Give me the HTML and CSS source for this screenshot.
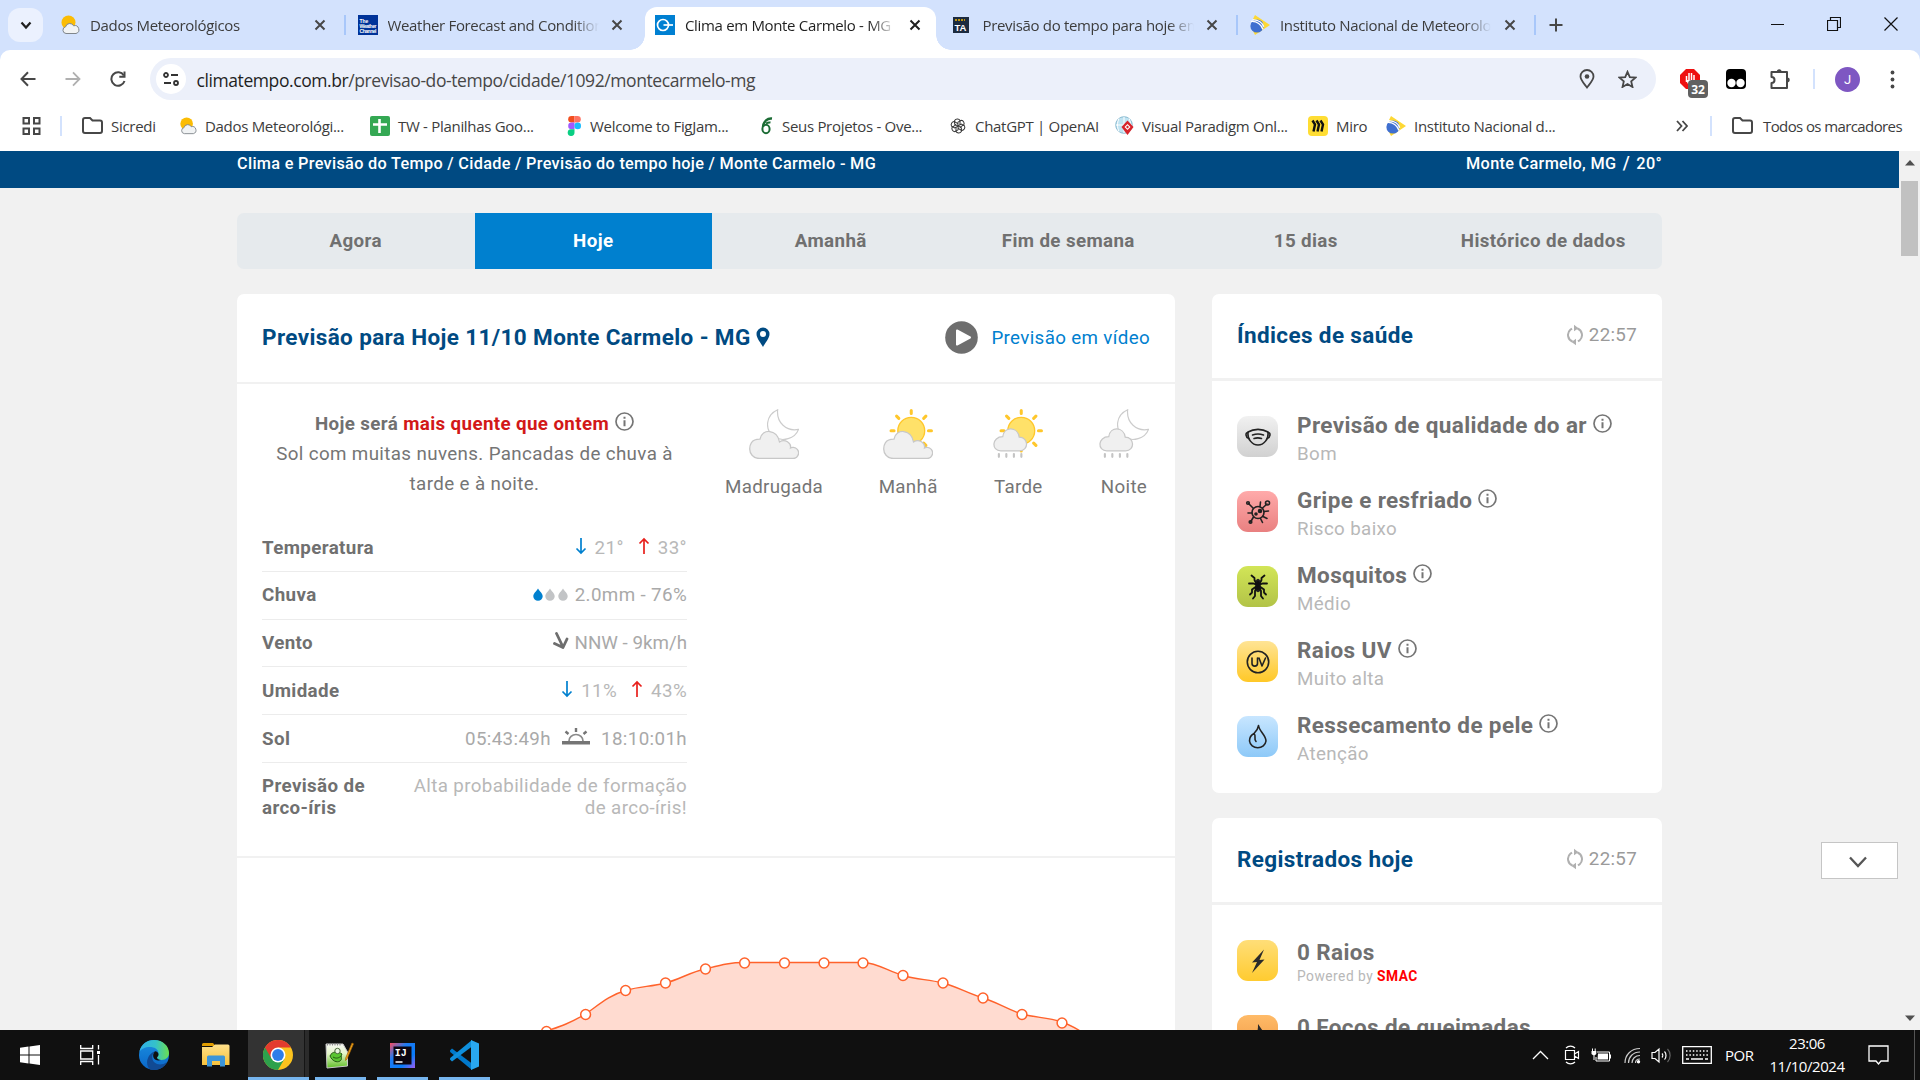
FILE: index.html
```html
<!DOCTYPE html>
<html lang="pt-BR">
<head>
<meta charset="utf-8">
<title>Clima em Monte Carmelo - MG</title>
<link rel="stylesheet" href="styles.css">
</head>
<body>
<svg class="defs" width="0" height="0">
  <defs>
    <linearGradient id="g-edge" x1="0" y1="0" x2="1" y2="0"><stop offset="0" stop-color="#2fb0ec"/><stop offset=".55" stop-color="#35c1c9"/><stop offset="1" stop-color="#6be04f"/></linearGradient>
    <linearGradient id="g-edge2" x1="0" y1="0" x2="0" y2="1"><stop offset="0" stop-color="#1b8fe0"/><stop offset="1" stop-color="#0a66c8"/></linearGradient>
    <linearGradient id="g-folder" x1="0" y1="0" x2="0" y2="1"><stop offset="0" stop-color="#ffe08a"/><stop offset="1" stop-color="#f7c23c"/></linearGradient>
    <linearGradient id="g-npp" x1="0" y1="0" x2="0" y2="1"><stop offset="0" stop-color="#f7f7f4"/><stop offset=".4" stop-color="#e4f5c9"/><stop offset="1" stop-color="#5fbf25"/></linearGradient>
    <linearGradient id="g-ij" x1="0" y1="0" x2="1" y2="1"><stop offset="0" stop-color="#fc4c61"/><stop offset=".35" stop-color="#1d7bf2"/><stop offset=".7" stop-color="#087cfa"/><stop offset="1" stop-color="#a05cf0"/></linearGradient>
    <symbol id="x" viewBox="0 0 12 12"><path d="M1.500 1.500l9 9M10.500 1.500l-9 9" stroke="currentColor" stroke-width="2" fill="none"/></symbol>
    <symbol id="sun-cloud" viewBox="0 0 20 20"><circle cx="8.500" cy="7.500" r="7" fill="#fbbc04"/><path d="M6 18.500a3.400 3.400 0 0 1-.4-6.700 4.300 4.300 0 0 1 8-1 3.800 3.800 0 0 1 2.400 7.700z" fill="#f1f3f4" stroke="#80868b" stroke-width="1"/></symbol>
    <symbol id="inmet" viewBox="0 0 20 20"><path d="M5 0L20 10 5 20 3 16 12 10 3 4z" fill="#fdd835"/><circle cx="7" cy="11" r="6.600" fill="#3f6fd0"/><path d="M1 6.500c6-.5 10.500 3 12 8M2.500 4.800c6-.3 10 3 11.200 7" stroke="#fff" stroke-width="1.300" fill="none"/></symbol>
    <symbol id="folder" viewBox="0 0 21 17"><path d="M1 3.200V14a2 2 0 0 0 2 2h15a2 2 0 0 0 2-2V5.500a2 2 0 0 0-2-2h-7.500L8 1H3a2 2 0 0 0-2 2z" fill="none" stroke="#474747" stroke-width="2"/></symbol>
    <symbol id="info" viewBox="0 0 19 19"><circle cx="9.500" cy="9.500" r="8.500" fill="none" stroke="#757575" stroke-width="1.700"/><path d="M9.500 8.300v6M9.500 4.800v2" stroke="#757575" stroke-width="2" fill="none"/></symbol>
    <symbol id="sync" viewBox="0 0 16 22"><path d="M5.500 17.500A7 7 0 0 1 3.300 5.800L5 4.600M10.500 4.500a7 7 0 0 1 2.200 11.700L11 17.400" fill="none" stroke="#b0b0b0" stroke-width="2"/><path d="M7 .8l4.500 3.500L7 7.200zM9 14.800v6.400L4.500 18z" fill="#b0b0b0"/></symbol>
    <symbol id="down" viewBox="0 0 12 18"><path d="M6 1v15M1.500 11.500L6 16l4.500-4.500" fill="none" stroke="#0080cf" stroke-width="1.700"/></symbol>
    <symbol id="up" viewBox="0 0 12 18"><path d="M6 17V2M1.500 6.500L6 2l4.500 4.500" fill="none" stroke="#e8201c" stroke-width="1.700"/></symbol>
    <symbol id="drop" viewBox="0 0 10 13"><path d="M5 .5C6.500 3.200 9.700 5.500 9.700 8.300a4.700 4.400 0 0 1-9.400 0C.3 5.500 3.500 3.200 5 .5z" fill="currentColor"/></symbol>
    <symbol id="moon" viewBox="0 0 34 34"><path d="M11 .7C-1 6-3 21 7 28.500c9 6 22 2 25.500-7.500C20 23.500 9.500 14 11 .7z" fill="#fff" stroke="#ccc" stroke-width="1.200"/></symbol>
    <symbol id="sun" viewBox="0 0 44 44"><circle cx="22" cy="22" r="13.300" fill="#ffe169" stroke="#ffc72b" stroke-width="1.300"/><path d="M22 2v3M22 39v3M2 22h3M39 22h3M7.500 7.500l2.200 2.200M34.300 34.300l2.200 2.200M36.500 7.500l-2.200 2.200M7.500 36.500l2.200-2.200" stroke="#ffc72b" stroke-width="3" stroke-linecap="round"/></symbol>
    <symbol id="cloud" viewBox="0 0 50 29"><path d="M10.500 28h33a5.500 5.500 0 0 0 1-11.200c-1.200.2-2 .2-3 .7 1-5-5.500-9.500-11-6C28.500-1.500 13-2.500 11 8.700 2 8.500.7 14.500.7 18.500c0 4 3 9.500 9.800 9.500z" fill="#f0f0f0" stroke="#c8c8c8" stroke-width="1.300"/></symbol>
    <symbol id="rain" viewBox="0 0 36 32"><path d="M8 23.500h19.500c9.500 0 9.500-14 -.5-14C25.500-1.500 11.500-2 10 9-1.500 9-2 23.500 8 23.500z" fill="#f0f0f0" stroke="#c8c8c8" stroke-width="1.300"/><path d="M6 26.800v3M13.700 26.800v3M21.500 26.800v3M29.200 26.800v3" stroke="#c4c4c4" stroke-width="2.200" stroke-linecap="round"/></symbol>
  </defs>
</svg>

<header class="browser">
  <div class="tabstrip">
    <div class="tab-search"><svg width="12" height="9" viewBox="0 0 12 9"><path d="M1.500 1.500L6 6.500l4.500-5" fill="none" stroke="#1f1f1f" stroke-width="2.200"/></svg></div>
    <div class="tab"><svg class="fav"><use href="#sun-cloud"/></svg><span class="tab-title">Dados Meteorológicos</span><svg class="close"><use href="#x"/></svg></div>
    <div class="tab divided"><svg class="fav" viewBox="0 0 20 20"><rect width="20" height="20" fill="#003399"/><g fill="#fff" font-family="Liberation Sans, sans-serif" font-size="5" font-weight="700"><text x="1.500" y="8">The</text><text x="1.500" y="13" textLength="17">Weather</text><text x="1.500" y="18" textLength="17">Channel</text></g></svg><span class="tab-title">Weather Forecast and Conditions</span><svg class="close"><use href="#x"/></svg></div>
    <div class="tab active"><svg class="fav" viewBox="0 0 20 20"><rect width="20" height="20" fill="#0080d2"/><circle cx="8" cy="10" r="5.500" fill="none" stroke="#fff" stroke-width="1.700"/><path d="M8.500 10H18" stroke="#fff" stroke-width="1.700"/></svg><span class="tab-title">Clima em Monte Carmelo - MG |</span><svg class="close"><use href="#x"/></svg></div>
    <div class="tab"><svg class="fav" viewBox="0 0 20 20"><rect x="0" y="2" width="16" height="16" fill="#1c2b3f"/><path d="M2 5h10" stroke="#f5b800" stroke-width="1.600" stroke-dasharray="2 1"/><text x="1.500" y="16" font-family="Liberation Sans, sans-serif" font-size="9.500" font-weight="700" fill="#fff">TA</text></svg><span class="tab-title">Previsão do tempo para hoje em M</span><svg class="close"><use href="#x"/></svg></div>
    <div class="tab divided"><svg class="fav"><use href="#inmet"/></svg><span class="tab-title">Instituto Nacional de Meteorologia</span><svg class="close"><use href="#x"/></svg></div>
    <div class="new-tab"><svg width="14" height="14" viewBox="0 0 14 14"><path d="M7 .5v13M.5 7h13" stroke="#474747" stroke-width="2"/></svg></div>
    <div class="win-controls">
      <svg width="13" height="13" viewBox="0 0 13 13"><path d="M0 6.500h13" stroke="#111"/></svg>
      <svg width="14" height="14" viewBox="0 0 14 14"><path d="M.5 3.500h10v10H.5zM3.500 3V.5h10v10H11" fill="none" stroke="#111" stroke-width="1.200"/></svg>
      <svg width="14" height="14" viewBox="0 0 14 14"><path d="M.5.5l13 13M13.500.5l-13 13" stroke="#111" stroke-width="1.200"/></svg>
    </div>
  </div>

  <div class="toolbar">
    <div class="nav-buttons">
      <svg width="16" height="16" viewBox="0 0 16 16"><path d="M15.500 8H2M8 1.300L1.500 8 8 14.700" fill="none" stroke="#474747" stroke-width="2"/></svg>
      <svg width="16" height="16" viewBox="0 0 16 16"><path d="M.5 8H14M8 1.300L14.500 8 8 14.700" fill="none" stroke="#b0b0b0" stroke-width="1.800"/></svg>
      <svg width="16" height="16" viewBox="0 0 16 16"><path d="M13.800 4.500A6.700 6.700 0 1 0 14.500 10" fill="none" stroke="#474747" stroke-width="2"/><path d="M15.500.5v6.200H9.300V4.800h4.200V.5z" fill="#474747"/></svg>
    </div>
    <div class="omnibox">
      <span class="site-info"><svg width="16" height="14" viewBox="0 0 16 14"><g fill="none" stroke="#333" stroke-width="1.800"><circle cx="3" cy="3" r="2"/><path d="M8 3h7M1 11h7"/><circle cx="13" cy="11" r="2"/></g></svg></span>
      <span class="url"><b>climatempo.com.br</b>/previsao-do-tempo/cidade/1092/montecarmelo-mg</span>
      <svg class="pin" width="16" height="20" viewBox="0 0 16 20"><path d="M8 18.500C5 14.500 1.500 11 1.500 7.500a6.500 6.500 0 0 1 13 0c0 3.500-3.500 7-6.500 11z" fill="none" stroke="#474747" stroke-width="1.800"/><circle cx="8" cy="7.500" r="2.300" fill="#474747"/></svg>
      <svg width="19" height="18" viewBox="0 0 19 18"><path d="M9.500 1.800l2.300 5.300 5.700.5-4.300 3.800 1.300 5.600-5-3-5 3 1.300-5.600L1.500 7.600l5.700-.5z" fill="none" stroke="#474747" stroke-width="1.800"/></svg>
    </div>
    <div class="extensions">
      <svg class="e-block" width="30" height="30" viewBox="0 0 30 30"><path d="M7 1h8l6 6v8l-6 6H7l-6-6V7z" fill="#ee1111"/><path d="M7.500 14V8M10 12V5M12.500 12V5M15 12V7" stroke="#fff" stroke-width="1.500" fill="none"/><path d="M6.700 12h9v5l-2 2h-3z" fill="#fff"/><rect x="9" y="12" width="20" height="18" rx="4" fill="#616161"/><text x="19" y="26" text-anchor="middle" font-family="Open Sans, sans-serif" font-size="12" font-weight="700" fill="#fff">32</text></svg>
      <svg class="e-dark" width="20" height="20" viewBox="0 0 20 20"><rect width="20" height="20" rx="4" fill="#000"/><circle cx="5.500" cy="14" r="4.200" fill="#fff"/><circle cx="14.500" cy="14" r="4.200" fill="#fff"/></svg>
      <svg class="e-puzzle" width="22" height="22" viewBox="0 0 22 22"><path d="M2.500 4h15.500v16h-15.500v-5a3 3 0 0 0 0-6z" fill="none" stroke="#474747" stroke-width="2" stroke-linejoin="round"/><path d="M7.800 4a2.400 2.700 0 0 1 4.800 0zM18 9.500a2.700 2.400 0 0 1 0 4.800z" fill="#474747"/></svg>
      <i class="rule"></i>
      <span class="avatar">J</span>
      <svg class="e-menu" width="5" height="19" viewBox="0 0 5 19"><g fill="#474747"><circle cx="2.500" cy="2.500" r="1.900"/><circle cx="2.500" cy="9.500" r="1.900"/><circle cx="2.500" cy="16.500" r="1.900"/></g></svg>
    </div>
  </div>

  <div class="bookmarks">
    <svg class="apps" width="19" height="18" viewBox="0 0 19 18"><path d="M1.500 1h5.500v5.500H1.500zM12 1h5.500v5.500H12zM1.500 11.500h5.500V17H1.500zM12 11.500h5.500V17H12z" fill="none" stroke="#474747" stroke-width="2"/></svg>
    <i class="rule"></i>
    <div class="bm" style="width:97px"><svg width="21" height="17"><use href="#folder"/></svg>Sicredi</div>
    <div class="bm" style="width:191px"><svg width="18" height="20"><use href="#sun-cloud"/></svg>Dados Meteorológi...</div>
    <div class="bm" style="width:197px"><svg width="20" height="20" viewBox="0 0 20 20"><rect width="20" height="20" rx="2" fill="#34a853"/><path d="M9.500 3v14M3 8.500h14" stroke="#fff" stroke-width="2.600"/></svg>TW - Planilhas Goo...</div>
    <div class="bm" style="width:192px"><svg width="15" height="20" viewBox="1 0 15 20"><path d="M8.500 0h-3a3.300 3.300 0 0 0 0 6.600h3z" fill="#f24e1e"/><path d="M8.500 0h3a3.300 3.300 0 0 1 0 6.600h-3z" fill="#ff7262"/><path d="M8.500 6.600h-3a3.300 3.300 0 0 0 0 6.600h3z" fill="#a259ff"/><circle cx="11.700" cy="9.900" r="3.300" fill="#1abcfe"/><path d="M8.500 13.200h-3a3.400 3.400 0 1 0 3 3.400z" fill="#0acf83"/></svg>Welcome to FigJam...</div>
    <div class="bm" style="width:190px"><svg width="15" height="18" viewBox="1 0 15 18"><path d="M14 1.500C9.500 1 5.500 4 5 10" fill="none" stroke="#1b6b34" stroke-width="2.400"/><ellipse cx="8" cy="12" rx="3.600" ry="4.200" fill="none" stroke="#1b6b34" stroke-width="2"/><path d="M8 6.500c1.500-1 3-1.300 4.500-1" stroke="#1b6b34" stroke-width="2" fill="none"/></svg>Seus Projetos - Ove...</div>
    <div class="bm" style="width:166px"><svg width="18" height="18" viewBox="0 0 18 18"><g fill="none" stroke="#333" stroke-width="1.200" transform="translate(1.350 1.350) scale(.85)"><path id="petal" d="M8.900 9V4.500l3.800-2.200c3 .2 4.300 3.600 3 5.500L11.500 10.300"/><use href="#petal" transform="rotate(60 9 9)"/><use href="#petal" transform="rotate(120 9 9)"/><use href="#petal" transform="rotate(180 9 9)"/><use href="#petal" transform="rotate(240 9 9)"/><use href="#petal" transform="rotate(300 9 9)"/></g></svg>ChatGPT | OpenAI</div>
    <div class="bm" style="width:193px"><svg width="19" height="19" viewBox="0 0 19 19"><circle cx="9" cy="9" r="8.300" fill="#bfe3f2" stroke="#86b8cf"/><path d="M9 .7v16.600M.7 9h16.600M4 2.500c-2 4-2 9 0 13M14 2.500c2 4 2 9 0 13" stroke="#fff" fill="none"/><path d="M12.500 4.500l6 6.500-6 8-6-8z" fill="#d8232a"/><path d="M12.500 8l3 3-3 3-3-3z" fill="#fff"/><path d="M12.500 9.500l1.500 1.500-1.500 1.500L11 11z" fill="#d8232a"/></svg>Visual Paradigm Onl...</div>
    <div class="bm" style="width:78px"><svg width="20" height="20" viewBox="0 0 20 20"><rect width="20" height="20" rx="4" fill="#ffdd33"/><path d="M4.500 4.500l2.500 4-1.500 7M8.500 4.500l2.500 4-1.500 7M12.500 4.500l2.500 4-1.500 7" fill="none" stroke="#111" stroke-width="2.400"/></svg>Miro</div>
    <div class="bm" style="width:290px"><svg width="20" height="20"><use href="#inmet"/></svg>Instituto Nacional d...</div>
    <svg class="more" width="12" height="12" viewBox="0 0 12 12"><path d="M1 1l4.500 5L1 11M6.500 1L11 6l-4.500 5" fill="none" stroke="#474747" stroke-width="1.800"/></svg>
    <i class="rule"></i>
    <div class="bm all"><svg width="21" height="17"><use href="#folder"/></svg>Todos os marcadores</div>
  </div>
</header>

<div class="viewport">
  <main class="page">
    <div class="topbar"><div class="wrap"><span>Clima e Previsão do Tempo / Cidade / Previsão do tempo hoje / Monte Carmelo - MG</span><span class="place">Monte Carmelo, MG <em>/</em> 20°</span></div></div>

    <nav class="wrap periods-nav">
      <a>Agora</a><a class="on">Hoje</a><a>Amanhã</a><a>Fim de semana</a><a>15 dias</a><a>Histórico de dados</a>
    </nav>

    <div class="wrap columns">
      <section class="card forecast">
        <div class="card-head">
          <h1>Previsão para Hoje 11/10 Monte Carmelo - MG<svg width="14" height="21" viewBox="0 0 14 21"><path fill-rule="evenodd" d="M7 20C5 16 .5 11.500.5 7a6.500 6.500 0 0 1 13 0c0 4.500-4.500 9-6.500 13zM7 4a3 3 0 1 0 0 6 3 3 0 0 0 0-6z" fill="#004a82"/></svg></h1>
          <a class="video"><svg width="33" height="33" viewBox="0 0 33 33"><circle cx="16.500" cy="16.500" r="16.300" fill="#6e6e6e"/><path d="M12 9.500l13 7-13 7z" fill="#fff" stroke="#fff" stroke-width="2" stroke-linejoin="round"/></svg><span>Previsão em vídeo</span></a>
        </div>
        <div class="card-body">
          <div class="summary">
            <p><b>Hoje será <span class="hot">mais quente que ontem</span></b><svg class="info"><use href="#info"/></svg><br>Sol com muitas nuvens. Pancadas de chuva à tarde e à noite.</p>
            <dl>
              <div><dt>Temperatura</dt><dd class="temp"><svg class="arrow"><use href="#down"/></svg>21°<svg class="arrow second"><use href="#up"/></svg>33°</dd></div>
              <div><dt>Chuva</dt><dd><span class="drops"><svg class="wet"><use href="#drop"/></svg><svg><use href="#drop"/></svg><svg><use href="#drop"/></svg></span>2.0mm - 76%</dd></div>
              <div><dt>Vento</dt><dd class="wind"><svg width="16" height="18" viewBox="0 0 16 18"><path d="M3.500 1.500L10 15M1.500 11.500L10 15.500l4-8.500" fill="none" stroke="#6e6e6e" stroke-width="2.800" stroke-linecap="round" stroke-linejoin="round"/></svg>NNW - 9km/h</dd></div>
              <div><dt>Umidade</dt><dd class="temp"><svg class="arrow"><use href="#down"/></svg>11%<svg class="arrow second"><use href="#up"/></svg>43%</dd></div>
              <div><dt>Sol</dt><dd class="sol">05:43:49h<svg width="28" height="18" viewBox="0 0 28 18"><path d="M0 13h28v3.500H0z" fill="#757575"/><path d="M7 13a7 6.500 0 0 1 14 0" fill="none" stroke="#8a8a8a" stroke-width="1.700"/><path d="M14 0v4M3.500 3.500l3 2.500M24.500 3.500l-3 2.500" stroke="#757575" stroke-width="2.400"/></svg>18:10:01h</dd></div>
              <div><dt>Previsão de arco-íris</dt><dd class="long">Alta probabilidade de formação de arco-íris!</dd></div>
            </dl>
          </div>
          <div class="day-parts">
            <figure><svg width="50" height="50" viewBox="0 0 50 50"><use href="#moon" x="18" y="0" width="33" height="33"/><use href="#cloud" y="21.500" width="50" height="29"/></svg><figcaption>Madrugada</figcaption></figure>
            <figure><svg width="50" height="50" viewBox="0 0 50 50"><use href="#sun" x="6" y="-.5" width="44.500" height="44.500"/><use href="#cloud" y="21.500" width="50" height="29"/></svg><figcaption>Manhã</figcaption></figure>
            <figure><svg width="50" height="50" viewBox="0 0 50 50"><use href="#sun" x="6" y="-.5" width="44.500" height="44.500"/><use href="#rain" y="19" width="35" height="31"/></svg><figcaption>Tarde</figcaption></figure>
            <figure><svg width="50" height="50" viewBox="0 0 50 50"><use href="#moon" x="18" y="0" width="33" height="33"/><use href="#rain" y="19" width="35" height="31"/></svg><figcaption>Noite</figcaption></figure>
          </div>
        </div>
        <div class="chart">
          <svg width="938" height="172" viewBox="0 858 938 172">
            <path d="M269 1045L309.500 1031C325 1026 333 1023 348.600 1014C364 1003 373 995 388.600 990.500C404 986 413 987 428.500 983C444 979 453 972 468.500 969C484 965 492 962.500 507.600 962.500H626C641 963 650 971 666 975.500C682 980 690 979 706 983C721 987 730 993 746 998C760 1002 769 1009 785 1014C800 1018 809 1017 825 1022C840 1027 850 1036 865 1045V1060H269z" fill="#ffdbd0" stroke="#ff622b" stroke-width="1.400"/>
            <g fill="#fff" stroke="#ff622b" stroke-width="1.500"><circle cx="309.500" cy="1031.500" r="4.900"/><circle cx="348.600" cy="1014.500" r="4.900"/><circle cx="388.600" cy="990.500" r="4.900"/><circle cx="428.500" cy="983" r="4.900"/><circle cx="468.500" cy="969" r="4.900"/><circle cx="507.600" cy="963" r="4.900"/><circle cx="547.500" cy="963" r="4.900"/><circle cx="587" cy="963" r="4.900"/><circle cx="626" cy="963" r="4.900"/><circle cx="666" cy="975.500" r="4.900"/><circle cx="706" cy="983" r="4.900"/><circle cx="746" cy="998" r="4.900"/><circle cx="785" cy="1014.500" r="4.900"/><circle cx="825" cy="1023" r="4.900"/></g>
          </svg>
        </div>
      </section>

      <aside>
        <section class="card">
          <div class="card-head small"><h2>Índices de saúde</h2><span class="updated"><svg width="16" height="22"><use href="#sync"/></svg>22:57</span></div>
          <ul class="indices">
            <li><span class="tile grey"><svg viewBox="0 0 26 26"><path d="M3 8C9 4.500 17 4.500 23 8c.8 7-4 13-10 13S2.200 15 3 8z"/><path d="M3 8.500c-3 0-2.500 5 .8 6M23 8.500c3 0 2.500 5-.8 6M7.500 11c4-1.500 7-1.500 11 0M9 14.500c3-1 4.500-1 7.500 0"/></svg></span><div><h3>Previsão de qualidade do ar<svg class="info"><use href="#info"/></svg></h3><p>Bom</p></div></li>
            <li><span class="tile red"><svg viewBox="0 0 26 26"><circle cx="13" cy="13.500" r="6"/><path d="M8 9L3.500 4.500M17.500 9L22 5M8.500 18l-3 5M18 17.500l4 2M15 7.500L15.500 3M3 14h4M15.500 19.500l2 4M19 12.500l4.500-.5"/><circle cx="3" cy="4" r="1.300"/><circle cx="22.500" cy="4" r="2"/><circle cx="5.500" cy="23" r="1.300"/><circle cx="15" cy="12" r="1.500" fill="#222"/><circle cx="11" cy="15" r="1" fill="#222"/></svg></span><div><h3>Gripe e resfriado<svg class="info"><use href="#info"/></svg></h3><p>Risco baixo</p></div></li>
            <li><span class="tile green"><svg viewBox="0 0 26 26"><ellipse cx="13" cy="11.500" rx="2" ry="6" fill="#111"/><path d="M12 11L9.500 6V4L6.500 1.500M14 11l2.500-5V4l3-2.500M12 11L8.500 9.500H4M14 11l3.500-1.500H22M12 12l-5 3.500v3L5 20.500M14 12l5 3.500v3l2 2M12 13l-2 4v5l-2 2.500M14 13l2 4v5l2 2.500" stroke="#111" stroke-width="1.800"/></svg></span><div><h3>Mosquitos<svg class="info"><use href="#info"/></svg></h3><p>Médio</p></div></li>
            <li><span class="tile yellow"><svg viewBox="0 0 26 26"><circle cx="13" cy="13" r="10.700"/><path d="M7 9v5.500c0 3.500 5.500 3.500 5.500 0V9M14 9l3 8 3.500-8"/></svg></span><div><h3>Raios UV<svg class="info"><use href="#info"/></svg></h3><p>Muito alta</p></div></li>
            <li><span class="tile blue"><svg viewBox="0 0 26 26"><path d="M13.500 1.500C14 7 21 11 21 17a8.300 7.500 0 0 1-16.500 0c0-4 2.500-6.500 4.500-7.500 1 1 1.200 2.500 1 4 -.2 1.500 0 3 1 4M9 9.500c2-2 4-4 4.500-8"/></svg></span><div><h3>Ressecamento de pele<svg class="info"><use href="#info"/></svg></h3><p>Atenção</p></div></li>
          </ul>
        </section>
        <section class="card registered">
          <div class="card-head small"><h2>Registrados hoje</h2><span class="updated"><svg width="16" height="22"><use href="#sync"/></svg>22:57</span></div>
          <ul class="indices">
            <li><span class="tile gold"><svg viewBox="0 0 26 26"><path d="M19 1.500L7 14.500l5-.5L7 25 19.500 11.500l-5 .5z" fill="#2a2a2a" stroke="none"/></svg></span><div><h3>0 Raios</h3><p class="powered">Powered by <b>SMAC</b></p></div></li>
            <li><span class="tile orange"><svg viewBox="0 0 26 26"><path d="M13 1c3 5 7 8 7 15a7 8 0 0 1-14 0c0-4 2-5 3-8l2 3c2-3 2-6 2-10z" fill="#2a2a2a" stroke="none"/></svg></span><div><h3>0 Focos de queimadas</h3></div></li>
          </ul>
        </section>
      </aside>
    </div>
    <button class="collapse"><svg width="18" height="12" viewBox="0 0 18 12"><path d="M1 1.500l8 8.500 8-8.500" fill="none" stroke="#555" stroke-width="2.300"/></svg></button>
  </main>
  <div class="scrollbar"><svg width="10" height="6" viewBox="0 0 10 6"><path d="M0 5.500L5 0l5 5.500z" fill="#505050"/></svg><i></i><svg width="10" height="6" viewBox="0 0 10 6"><path d="M0 .5L5 6 10 .5z" fill="#505050"/></svg></div>
</div>

<footer class="taskbar">
  <div class="app sys"><svg width="20" height="20" viewBox="0 0 20 20"><path d="M0 2.800L8.500 1.600v7.900H0zM9.500 1.400L20 0v9.500H9.500zM0 10.500h8.500v7.900L0 17.200zM9.500 10.500H20V20L9.500 18.600z" fill="#fff"/></svg></div>
  <div class="app sys view"><svg width="20" height="20" viewBox="0 0 20 20"><path d="M.7 0v3.500h12V0M.7 20v-3.500h12V20M.7 6h12v8H.7zM18.500 0v4.500M18.500 10v9.500" fill="none" stroke="#fff" stroke-width="1.300"/><path d="M17 6h3v3h-3z" fill="#fff"/></svg></div>
  <div class="app"><svg width="30" height="30" viewBox="0 0 30 30"><circle cx="15" cy="15" r="15" fill="url(#g-edge2)"/><path d="M.3 12C2 4 8 0 15 0c9 0 15 6 15 13 0 4-3 7-7.500 7-3 0-4.500-1-4.500-2.500 0-1 1.500-1.500 1.500-4C19.500 9 15 7 11 7 6 7 2 9 .3 12z" fill="url(#g-edge)"/><path d="M11 29.500C5 24 9 13 16 11.500c-4 3-4 10 2 12.500 3 1 7 .5 10-2-3 6-10 9.500-17 7.500z" fill="#114a94"/><path d="M16 11.300c2 0 3.500 1.300 3.500 3.200 0 2-1.500 2-1.500 3 0 1.500 1.500 2.500 4 2.500-3 1-6.500 0-7.500-2.500-.8-2-.3-4.500 1.500-6.200z" fill="#101010"/></svg></div>
  <div class="app"><svg width="28" height="24" viewBox="0 0 28 24"><path d="M0 1.500A1.500 1.500 0 0 1 1.500 0H11l2.500 3H0z" fill="#e19d00"/><path d="M0 4h10l3-2.500h13A1.500 1.500 0 0 1 27.500 3v19H0z" fill="url(#g-folder)"/><path d="M5 23.500V14a1.500 1.500 0 0 1 1.500-1.500h15A1.500 1.500 0 0 1 23 14v9.500h-5V18h-8v5.500z" fill="#3c95d9"/></svg></div>
  <div class="app running current"><svg width="30" height="30" viewBox="0 0 30 30"><circle cx="15" cy="15" r="15" fill="#fcc31e"/><path d="M15 15L2 7.500A15 15 0 0 0 15 30l6.500-11.250z" fill="#2da14c"/><path d="M2 7.500A15 15 0 0 1 28 7.500H15L8.500 18.750z" fill="#e33b2e"/><circle cx="15" cy="15" r="7.500" fill="#fff"/><circle cx="15" cy="15" r="5.900" fill="#2f7de9"/></svg></div>
  <div class="app running"><svg width="30" height="28" viewBox="0 0 30 28"><path d="M1 3h17l4.500 8v14L2 27z" fill="url(#g-npp)" stroke="#c9c9c9"/><path d="M2 3.500h15" stroke="#888" stroke-width="2" stroke-dasharray="1 1.500"/><path d="M5 15c2-5 8-5 12-2-2 3 1 5-2 7s-8 0-10-5z" fill="#5ac531" stroke="#245a12"/><circle cx="12.500" cy="10" r="2.700" fill="#e9f5df" stroke="#4a6a3a"/><path d="M8 16c3 2 6 1 8-1" stroke="#245a12" fill="none"/><path d="M27 2l1.500.8L22 18l-1.500 1.500.2-2.500z" fill="#f3a81e" stroke="#a86405" stroke-width=".7"/></svg></div>
  <div class="app running"><svg width="27" height="27" viewBox="0 0 27 27"><path d="M1 1h25v25H1z" fill="url(#g-ij)"/><path d="M4.500 4.500h18v18h-18z" fill="#0b0510"/><path d="M6.500 20h7" stroke="#fff" stroke-width="1.500"/><text x="5.800" y="14" font-family="Liberation Mono, monospace" font-size="10" font-weight="700" fill="#fff">IJ</text></svg></div>
  <div class="app running"><svg width="30" height="30" viewBox="0 0 30 30"><path d="M1 10.500l2-2 20 15V30L1.200 12z" fill="#0179cb"/><path d="M1 19.500l2 2 20-15V0L1.200 18z" fill="#0f8fdc"/><path d="M22 0l8 3.500v23L22 30z" fill="#29a8f1"/></svg></div>
  <div class="tray">
    <svg width="17" height="10" viewBox="0 0 17 10"><path d="M1 9l7.500-7.500L16 9" fill="none" stroke="#fff" stroke-width="1.300"/></svg>
    <svg class="t-cam" width="16" height="20" viewBox="0 0 16 20"><path d="M1.500 5.500h9v9h-9zM10.500 9l4-2.500v7l-4-2.500M2 3c2.500-2.500 6.500-2.500 9 0M2 17c2.500 2.500 6.500 2.500 9 0" fill="none" stroke="#fff" stroke-width="1.200"/></svg>
    <svg class="t-bat" width="21" height="15" viewBox="0 0 21 15"><path d="M6 4h12.500v9H5V9" fill="none" stroke="#fff"/><path d="M7 5.500h10v6H6.500zM18.500 6.500h1.500v4h-1.500zM.5 3h4.800v3L3 8 .5 6zM1 .5h1V3H1zM3.700.5h1V3h-1zM2.500 7h1v5h-1z" fill="#fff"/></svg>
    <svg class="t-wifi" width="17" height="17" viewBox="0 0 17 17"><g fill="none" stroke="#ccc" stroke-width="1.200"><path d="M1 16C1 8 7 1.500 16 1.500M4.500 16C4.500 10 9 5 16 5M8 16c0-4 3-7.500 8-7.500M11.500 16c0-2 1.500-4 4.500-4"/></g><circle cx="14.500" cy="14.700" r="1.700" fill="#fff"/></svg>
    <svg class="t-vol" width="21" height="17" viewBox="0 0 21 17"><path d="M1 5.500h3L8 2v13l-4-3.500H1zM11 6.500c1 1 1 3 0 4M13.500 4.500c2 2 2 6 0 8" fill="none" stroke="#fff" stroke-width="1.200"/><path d="M16.500 2c3.500 3.500 3.500 9.500 0 13" fill="none" stroke="#666" stroke-width="1.200"/></svg>
    <svg class="t-key" width="30" height="18" viewBox="0 0 30 18"><path d="M.7.7h28.600v16.600H.7z" fill="none" stroke="#fff" stroke-width="1.300"/><path d="M4 5h22M4 9h22" stroke="#fff" stroke-width="1.500" stroke-dasharray="1.500 1.900"/><path d="M4 13h3M9 13h12M23 13h3" stroke="#fff" stroke-width="1.500"/></svg>
    <span class="lang">POR</span>
    <span class="clock">23:06<br>11/10/2024</span>
    <svg width="21" height="21" viewBox="0 0 21 21"><path d="M1 1h19v15h-7l-2.500 3L8 16H1z" fill="none" stroke="#fff" stroke-width="1.300"/></svg>
    <i class="desk"></i>
  </div>
</footer>
</body>
</html>
```

FILE: styles.css
```css
* { box-sizing: border-box; }
body, h1, h2, h3, p, ul, dl, dd, figure { margin: 0; padding: 0; }
body {
  width: 1920px;
  height: 1080px;
  overflow: hidden;
  display: flex;
  flex-direction: column;
  font-family: Roboto, sans-serif;
}
svg { flex: none; }
.defs { position: absolute; }

/* Browser window */
.browser {
  height: 151px;
  flex: none;
  font-family: "Open Sans", sans-serif;
  font-size: 15px;
  color: #3c3c3c;
  background: #d3e2fd;
}
.tabstrip { height: 50px; display: flex; align-items: center; }
.tab-search {
  width: 35px;
  height: 34px;
  margin: 0 2px 0 8px;
  border-radius: 12px;
  background: #ebf1fe;
  display: flex;
  align-items: center;
  justify-content: center;
}
.tab {
  position: relative;
  width: 297.5px;
  height: 50px;
  padding: 0 17px 0 15px;
  display: flex;
  align-items: center;
}
.fav { width: 20px; height: 20px; }
.tab-title {
  width: 212px;
  margin: 0 auto 0 10px;
  overflow: hidden;
  white-space: nowrap;
  letter-spacing: -.33px;
  -webkit-mask-image: linear-gradient(90deg, #000 185px, transparent 211px);
  mask-image: linear-gradient(90deg, #000 185px, transparent 211px);
}
.close { width: 12px; height: 12px; color: #474747; }
.divided::before, .tabstrip .new-tab::before {
  content: "";
  position: absolute;
  left: 1px;
  top: 15px;
  width: 2px;
  height: 20px;
  background: #a8c7fa;
}
.active { color: #1f1f1f; z-index: 1; }
.active > * { z-index: 1; }
.active .close { color: #1f1f1f; }
.active::before {
  content: "";
  position: absolute;
  inset: 7px 2px 0 5px;
  border-radius: 12px 12px 0 0;
  background: #fff;
}
.active::after {
  content: "";
  position: absolute;
  left: -10px;
  right: -13px;
  bottom: 0;
  height: 15px;
  background:
    radial-gradient(circle at 0 0, transparent 14.500px, #fff 15px) 0 0 / 15px 15px no-repeat,
    radial-gradient(circle at 100% 0, transparent 14.500px, #fff 15px) 100% 0 / 15px 15px no-repeat;
}
.new-tab { position: relative; height: 50px; padding-left: 16px; display: flex; align-items: center; }
.win-controls { margin-left: auto; padding: 0 22px 2px 0; display: flex; align-items: center; gap: 43px; }

.toolbar {
  height: 58px;
  padding-left: 20px;
  border-radius: 10px 10px 0 0;
  background: #fff;
  display: flex;
  align-items: center;
}
.nav-buttons { width: 130px; display: flex; gap: 29px; }
.omnibox {
  width: 1506px;
  height: 42px;
  padding: 0 19px 0 6px;
  border-radius: 21px;
  background: #ecf0fa;
  display: flex;
  align-items: center;
}
.site-info {
  width: 30px;
  height: 30px;
  border-radius: 50%;
  background: #fff;
  display: flex;
  align-items: center;
  justify-content: center;
}
.url { margin: 1px auto 0 10.500px; font-size: 17.5px; letter-spacing: -.415px; color: #474747; }
.url b { font-weight: 400; color: #1f1f1f; }
.pin { margin-right: 23px; }
.extensions { flex: 1; padding-left: 23px; display: flex; align-items: center; }
.e-block { margin: 8px 17px 0 0; }
.e-dark { margin-right: 23px; }
.e-puzzle { margin-right: 22px; }
.e-menu { margin-left: 30px; }
.rule { width: 2px; height: 20px; flex: none; background: #d3e2fd; }
.extensions .rule { margin-right: 20px; }
.avatar {
  width: 25px;
  height: 25px;
  border-radius: 50%;
  background: #7e57c2;
  color: #fff;
  font: 13px/25px Roboto, sans-serif;
  text-align: center;
}
.bookmarks {
  height: 43px;
  padding: 0 0 8px 22px;
  background: #fff;
  display: flex;
  align-items: center;
  letter-spacing: -.3px;
}
.apps { margin-right: 19px; }
.apps + .rule { margin-right: 20px; }
.bm { flex: none; display: flex; align-items: center; gap: 8px; white-space: nowrap; }
.more { margin-right: 22px; }
.bm.all { margin-left: 20px; gap: 10px; letter-spacing: -.599px; }

/* Page */
.viewport { height: 879px; flex: none; display: flex; overflow: hidden; }
.page { position: relative; width: 1899px; height: 879px; overflow: hidden; background: #f1f1f1; letter-spacing: .375px; }
.wrap { width: 1425px; margin-left: 237px; }
.topbar { height: 37px; background: #004a82; }
.topbar .wrap {
  display: flex;
  justify-content: space-between;
  color: #fff;
  font: 500 16.25px/26px Roboto, sans-serif;
  letter-spacing: .3125px;
}
.place { line-height: 24px; }
.topbar em { margin: 0 2px; font-size: 18px; font-style: normal; }
.periods-nav {
  height: 56px;
  margin-top: 25px;
  border-radius: 7px;
  background: #e6eaed;
  display: flex;
  overflow: hidden;
}
.periods-nav a {
  flex: 1;
  color: #707070;
  font: 700 18.75px/57px Roboto, sans-serif;
  text-align: center;
}
.periods-nav .on { background: #0080cf; color: #fff; }
.columns { margin-top: 25px; display: flex; gap: 37px; align-items: flex-start; }
.card { background: #fff; border-radius: 7px; }
.forecast { width: 938px; }
.card-head {
  height: 90px;
  padding: 0 25px 2px;
  border-bottom: 2px solid #f1f1f1;
  display: flex;
  align-items: center;
  justify-content: space-between;
}
.card-head.small { height: 87px; padding-bottom: 2px; border-bottom-width: 3px; }
h1, h2 { font-size: 22.5px; font-weight: 700; color: #004a82; }
h1 { display: flex; align-items: center; gap: 5px; }
.video { display: flex; align-items: center; gap: 13px; color: #0080cf; font-size: 18.75px; }
.video span { padding-top: 2px; letter-spacing: .35px; }
.updated { display: flex; align-items: center; gap: 6px; color: #9a9a9a; font-size: 18.75px; letter-spacing: .3px; }

.card-body {
  height: 474px;
  padding: 24px 25px 0;
  border-bottom: 2px solid #f1f1f1;
  display: flex;
  justify-content: space-between;
  color: #757575;
  font-size: 18.75px;
}
.summary { width: 425px; padding-top: 1px; }
.summary p { padding: 0 10px; line-height: 30px; text-align: center; }
.summary b { font-weight: 700; color: #707070; }
.summary .hot { color: #d21818; }
.info { width: 19px; height: 19px; margin-left: 6px; }
.summary .info { vertical-align: -1px; }
dl { margin-top: 25px; color: #b2b2b2; line-height: 22px; }
dl > div {
  height: 47.750px;
  padding-top: 12.500px;
  border-bottom: 1px solid #ececec;
  display: flex;
  justify-content: space-between;
}
dl > div:last-child { height: auto; padding-top: 12px; border: 0; }
dt { width: 125px; font-weight: 700; color: #707070; }
dd { display: flex; align-items: flex-start; white-space: nowrap; color: #a9a9a9; }
dd.temp, dd.long { color: #b8b8b8; }
dd.long { display: block; width: 290px; white-space: normal; text-align: right; }
.arrow { width: 12px; height: 18px; margin: 0 8px 0 0; }
.arrow.second { margin-left: 14px; }
.drops { display: flex; gap: 2.500px; margin: 4px 7px 0 0; color: #c2c4c6; }
.drops svg { width: 10px; height: 13px; }
.drops .wet { color: #0080cf; }
.wind { letter-spacing: 0; }
.wind svg { margin: 0 6px 0 0; }
.sol { padding-top: .5px; }
.sol svg { margin: 0 11px; }

.day-parts { width: 424px; margin-right: 1px; padding-top: 1px; display: flex; justify-content: space-between; align-items: flex-start; }
figure { min-width: 50px; display: flex; flex-direction: column; align-items: center; }
figcaption { margin-top: 17px; line-height: 22px; letter-spacing: .3px; }
.chart { height: 192px; }
.chart svg { display: block; }

aside { width: 450px; display: flex; flex-direction: column; gap: 25px; }
.indices { height: 412px; padding: 32px 25px 0; list-style: none; }
.indices li { height: 75px; display: flex; gap: 19px; }
h3 { margin-bottom: 6px; line-height: 24px; font-size: 22.5px; font-weight: 700; color: #707070; display: flex; }
h3 .info { margin: 1px 0 0 6px; }
.indices p { line-height: 22px; font-size: 18.750px; color: #b8b8b8; }
.tile {
  width: 41px;
  height: 41px;
  margin-top: 3px;
  border-radius: 11px;
  display: flex;
  align-items: center;
  justify-content: center;
}
.tile svg { width: 26px; height: 26px; fill: none; stroke: #222; stroke-width: 1.600; stroke-linecap: round; stroke-linejoin: round; }
.grey { background: linear-gradient(#f1f1f1, #d1d1d1); }
.red { background: linear-gradient(#ffaaaa, #e98080); }
.green { background: linear-gradient(#d2e557, #b2c347); }
.yellow { background: linear-gradient(#ffe495, #ffc827); }
.blue { background: linear-gradient(#c8e6ff, #8dc9f8); }
.gold { background: linear-gradient(#ffde78, #ffcb30); }
.orange { background: linear-gradient(#ffbb68, #ee9540); }
.registered h3 { margin: 3px 0 2px; }
.indices .powered { font-size: 13.750px; line-height: 20px; letter-spacing: .5px; }
.powered b { color: #f00; }

.collapse {
  position: absolute;
  left: 1821px;
  top: 691px;
  width: 77px;
  height: 37px;
  border: 1px solid #c5c5c5;
  background: #fff;
  display: flex;
  align-items: center;
  justify-content: center;
  padding: 2px 3px 0 0;
}
.scrollbar { width: 21px; padding: 9px 0; background: #f1f1f1; display: flex; flex-direction: column; align-items: center; }
.scrollbar i { width: 17px; height: 75px; margin: 15px 0 auto; background: #c1c1c1; }

/* Taskbar */
.taskbar { height: 50px; flex: none; background: #101010; display: flex; }
.app { position: relative; width: 62px; display: flex; align-items: center; justify-content: center; }
.sys { width: 60px; }
.sys.view { margin-right: 3px; }
.running::after {
  content: "";
  position: absolute;
  left: 6px;
  right: 5px;
  bottom: 0;
  height: 3px;
  background: #76b5ee;
}
.current { background: linear-gradient(90deg, #101010 1px, #333 1px 57px, #151515 57px 58px, #2b2b2b 58px); }
.current::after { left: 1px; right: 0; }
.tray { margin-left: auto; display: flex; align-items: center; color: #fff; font-family: "Open Sans", sans-serif; font-size: 15px; letter-spacing: -.46px; }
.t-cam { margin-left: 15px; }
.t-bat { margin-left: 11px; }
.t-wifi { margin-left: 12px; }
.t-vol { margin-left: 10px; }
.t-key { margin-left: 10px; }
.lang { width: 29px; margin-left: 13px; }
.clock { width: 90px; margin: 0 16px 0 8px; line-height: 23px; text-align: center; }
.desk { width: 1px; height: 50px; margin: 0 5px 0 25px; background: #555; }
```
